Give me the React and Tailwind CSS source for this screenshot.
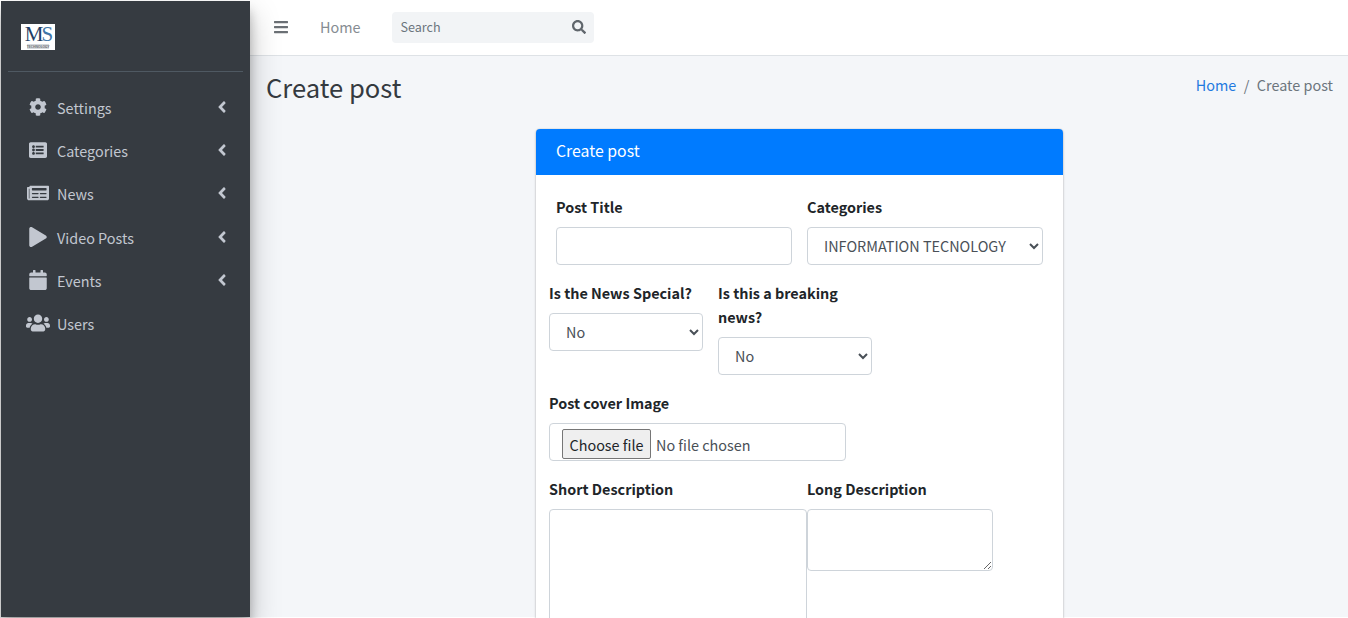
import { FaCog, FaListAlt, FaNewspaper, FaPlay, FaCalendar, FaUsers, FaAngleLeft, FaBars, FaSearch } from 'react-icons/fa'

const font = "font-['Noto_Sans_CJK_SC','Source_Sans_Pro',sans-serif]"

const navItems = [
  { label: 'Settings', icon: FaCog, size: 18, arrow: true },
  { label: 'Categories', icon: FaListAlt, size: 18, arrow: true },
  { label: 'News', icon: FaNewspaper, size: 22, arrow: true },
  { label: 'Video Posts', icon: FaPlay, size: 20, arrow: true },
  { label: 'Events', icon: FaCalendar, size: 20, arrow: true },
  { label: 'Users', icon: FaUsers, size: 24, arrow: false },
]

const fieldClass = 'block h-[38px] rounded border border-[#ced4da] bg-white px-3 text-[14.4px] leading-6 text-[#495057] outline-none'
// select text sits 1px higher than centred in the reference
const selectClass = `${fieldClass} w-full pt-[5px] pb-[7px]`

function Label({ children, className = '' }) {
  return <label className={`mb-2 block text-[14.4px] leading-6 font-bold text-[#212529] ${className}`}>{children}</label>
}

function Sidebar() {
  return (
    <aside className="relative z-10 flex h-full w-[249px] shrink-0 flex-col bg-[#363b41] text-[#c2c7d0] shadow-[0_14px_28px_rgba(0,0,0,.25),0_10px_10px_rgba(0,0,0,.22)]">
      <div className="mx-[7px] h-[71px] border-b border-[#4f5962] pt-[23px] pl-[13px]">
        <div className="flex h-[26px] w-[34px] flex-col items-center bg-white leading-none">
          <span className="font-['Liberation_Serif',serif] text-[21px] leading-[20px] tracking-[-2px] text-[#1f3f66]">
            M<span className="text-[#3f76a8]">S</span>
          </span>
          <span className="bg-[#d5d9de] text-[3.5px] leading-[5px] whitespace-nowrap text-[#333]">TECHNOLOGY</span>
        </div>
      </div>
      <nav className="mt-[14px] flex flex-col">
        {navItems.map((item) => {
          const Icon = item.icon
          return (
            <div key={item.label} className="flex h-[43.3px] items-center">
              <span className="flex w-[56px] shrink-0 justify-center pl-[18px] -translate-y-px">
                <Icon size={item.size} />
              </span>
              <span className="flex-1 text-[14.4px] leading-6">{item.label}</span>
              {item.arrow && <FaAngleLeft size={18} className="mr-[19px] -translate-y-px" />}
            </div>
          )
        })}
      </nav>
    </aside>
  )
}

function Navbar() {
  return (
    <header className="-mt-px flex h-[56px] shrink-0 items-center border-b border-[#dee2e6] bg-white">
      <FaBars size={16} className="ml-[23px] -translate-y-px text-[#6b7075]" />
      <span className="ml-[31px] -translate-y-px text-[14.4px] leading-6 text-[#868c92]">Home</span>
      <div className="ml-[31px] flex h-[31px] w-[202px] items-center justify-between rounded bg-[#f2f4f6] pr-2 pb-0.5 pl-[9px]">
        <span className="text-[12.6px] leading-5 text-[#6c757d]">Search</span>
        <FaSearch size={14} className="text-[#60666c]" />
      </div>
    </header>
  )
}

function PostForm() {
  return (
    <section className="mt-[23px] ml-[286px] w-[527px] rounded bg-white shadow-[0_0_1px_rgba(0,0,0,.35),0_1px_3px_rgba(0,0,0,.2)]">
      <div className="flex h-[46px] items-center rounded-t bg-[#007bff] px-5 pb-0.5 text-[15.84px] text-white">Create post</div>
      <form className="pt-5">
        <div className="mb-4 flex gap-[15px] px-5">
          <div className="w-[236px]">
            <Label>Post Title</Label>
            <input type="text" className={`${fieldClass} w-full`} />
          </div>
          <div className="w-[236px]">
            <Label>Categories</Label>
            <select className={selectClass}>
              <option>INFORMATION TECNOLOGY</option>
            </select>
          </div>
        </div>
        <div className="mb-4 flex gap-[15px] px-[13px]">
          <div className="w-[154px]">
            <Label>Is the News Special?</Label>
            <select className={selectClass}>
              <option>No</option>
            </select>
          </div>
          <div className="w-[154px]">
            <Label>Is this a breaking news?</Label>
            <select className={selectClass}>
              <option>No</option>
            </select>
          </div>
        </div>
        <div className="mb-4 px-[13px]">
          <Label>Post cover Image</Label>
          <div className="flex h-[38px] w-[297px] items-end rounded border border-[#ced4da] bg-white pb-px pl-3 text-[14.4px] text-[#495057]">
            <button type="button" className="h-[30px] w-[89px] rounded-[2px] border border-[#767676] bg-[#efefef] pt-0.5 text-[14.4px] leading-6 text-[#212529]">
              Choose file
            </button>
            <span className="mb-[2px] ml-[5px] leading-6">No file chosen</span>
          </div>
        </div>
        <div className="flex px-[13px]">
          <div className="w-[258px]">
            <Label>Short Description</Label>
            <textarea className="block h-[200px] w-full rounded border border-[#ced4da] bg-white" />
          </div>
          <div className="w-[186px]">
            <Label>Long Description</Label>
            <textarea className="block h-[62px] w-full rounded border border-[#ced4da] bg-white" />
          </div>
        </div>
      </form>
    </section>
  )
}

export default function App() {
  return (
    <div className={`flex h-[618px] overflow-hidden bg-white pt-px pb-px pl-px ${font}`}>
      <Sidebar />
      <main className="flex min-w-0 flex-1 flex-col bg-[#f4f6f9]">
        <Navbar />
        <div className="flex items-center justify-between pt-[12px] pr-[15px] pl-4">
          <h1 className="text-[25.6px] leading-[38px] font-normal text-[#343a40]">Create post</h1>
          <div className="-mt-1 flex gap-[7.5px] text-[14.4px] leading-6 text-[#6c757d]">
            <span className="text-[#1f7ae0]">Home</span>
            <span>/</span>
            <span>Create post</span>
          </div>
        </div>
        <PostForm />
      </main>
    </div>
  )
}
